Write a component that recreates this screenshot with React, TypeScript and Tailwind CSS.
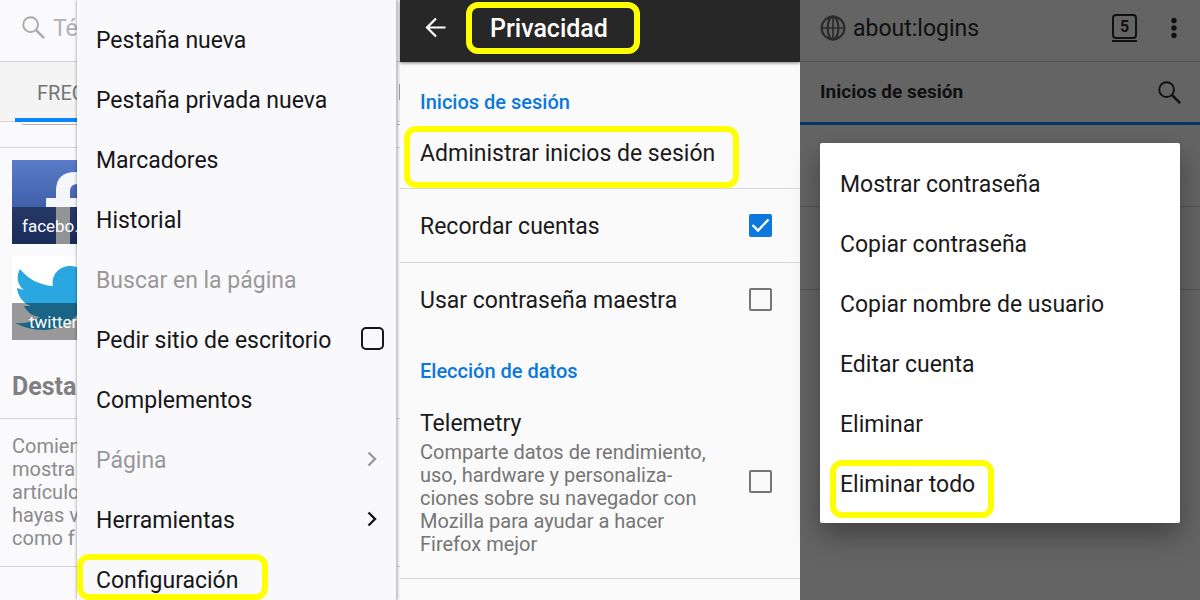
import { useState } from 'react';
import type { ReactNode } from 'react';

const menuItems = [
  { label: 'Pestaña nueva' },
  { label: 'Pestaña privada nueva' },
  { label: 'Marcadores' },
  { label: 'Historial' },
  { label: 'Buscar en la página', disabled: true },
  { label: 'Pedir sitio de escritorio', checkbox: true },
  { label: 'Complementos' },
  { label: 'Página', disabled: true, submenu: true },
  { label: 'Herramientas', submenu: true },
  { label: 'Configuración', highlighted: true },
];

const loginActions = [
  'Mostrar contraseña',
  'Copiar contraseña',
  'Copiar nombre de usuario',
  'Editar cuenta',
  'Eliminar',
  'Eliminar todo',
];

function SearchIcon({ className }: { className: string }) {
  return (
    <svg viewBox="0 0 24 24" fill="none" stroke="currentColor" strokeWidth="2" className={className}>
      <circle cx="9" cy="9" r="7.7" />
      <path d="M14.5 14.5L23 23" strokeWidth="2.6" />
    </svg>
  );
}

function Chevron() {
  return (
    <svg viewBox="0 0 10 16" fill="none" stroke="currentColor" strokeWidth="2.4" className="w-[10px] h-4">
      <path d="M1.5 1.5L8 8L1.5 14.5" />
    </svg>
  );
}

function Divider() {
  return <div className="h-px bg-[#d4d4d6]" />;
}

// 첫 번째 화면: 메뉴가 열린 홈
function HomeScreen() {
  const [desktop, setDesktop] = useState(false);

  return (
    <section className="relative min-h-screen overflow-hidden bg-[#fafafc]">
      <div className="h-[61px] pl-[22px] pb-[6px] flex items-center gap-2 text-[#a9a9ab]">
        <SearchIcon className="w-[23px] h-[23px] shrink-0" />
        <input
          type="text"
          aria-label="Buscar"
          placeholder="Té"
          className="min-w-0 flex-1 pt-[3px] text-[23px] placeholder:text-[#b0b0b2]"
        />
      </div>
      <Divider />
      <div className="h-[60px] pl-[15px] bg-[#f4f4f4] border-b border-[#d4d4d6] flex items-center justify-between text-xl text-[#747476]">
        <button type="button" className="h-[60px] w-[180px] pl-[22px] pt-[6px] text-left border-b-4 border-[#0a84ff]">
          FREC
        </button>
        <span className="w-px h-4 bg-[#a0a0a2]" />
      </div>
      <div className="ml-[21px] h-[3px] rounded-bl-lg border-b border-[#b4b4b6]" />
      <div className="h-[23px] border-b border-[#d4d4d6]" />

      {/* 자주 방문한 사이트 */}
      <div className="pt-3 pl-3 flex flex-col gap-3 w-[96px]">
        <a href="#facebook" className="relative block h-[84px] bg-linear-to-b from-[#5a7cc8] to-[#2c4a94]">
          <svg viewBox="0 0 84 84" className="w-[84px] h-[84px]">
            <path
              d="M44 84V47H34V38H44V31C44 18 51 12 63 12H76V24H66C60 24 58 27 58 32V38H74L72 47H58V84Z"
              fill="#f4f6fa"
            />
          </svg>
          <span className="absolute inset-x-0 bottom-0 h-[37px] bg-black/40 pl-[10px] text-[17px] leading-[38px] text-white">
            facebo…
          </span>
        </a>
        <a href="#twitter" className="relative block h-[84px] bg-white">
          <svg viewBox="0 0 84 84" className="w-[84px] h-[84px]">
            <path
              d="M8 13C16 23 27 29 41 30C39 19 47 10 58 10C64 10 68 12 71 16L82 12L76 21L84 19L76 27C77 54 57 74 31 74C20 74 11 71 3 67C13 68 21 66 28 61C20 60 15 56 12 50H19C11 47 6 41 5 32L12 34C5 29 4 20 8 13Z"
              fill="#2aa7e1"
            />
          </svg>
          <span className="absolute inset-x-0 bottom-0 h-[37px] bg-black/40 pl-[17px] text-[17px] leading-[38px] text-white">
            twitter
          </span>
        </a>
      </div>

      <h2 className="h-[78px] pl-3 pt-4 text-[25px] leading-[62px] font-bold text-[#808082]">Desta</h2>
      <Divider />
      <p className="h-[147px] px-3 pt-4 text-xl leading-[23px] text-[#8b8b8d]">
        Comien
        <br />
        mostra
        <br />
        artículo
        <br />
        hayas v
        <br />
        como f
      </p>
      <Divider />

      {/* 메뉴 */}
      <nav className="absolute inset-y-0 left-[77px] right-[3px] overflow-hidden pt-[11px] bg-[#f9f9fb] border-r border-[#c8c8ca] shadow-[0_0_3px_rgba(0,0,0,0.45)] text-[23px]">
        {menuItems.map((item) => {
          const color = item.disabled ? 'text-[#98989a]' : 'text-[#161618]';
          if (item.checkbox) {
            return (
              <label key={item.label} className="h-[60px] pl-[19px] pr-3 flex items-center justify-between text-[#161618]">
                {item.label}
                <span className="h-[28px]">
                  <input
                    type="checkbox"
                    checked={desktop}
                    onChange={(e) => setDesktop(e.target.checked)}
                    className="block appearance-none w-[23px] h-[23px] rounded-[5px] border-2 border-[#161618] checked:bg-[#161618]"
                  />
                </span>
              </label>
            );
          }
          return (
            <button
              key={item.label}
              type="button"
              disabled={item.disabled}
              className={`relative w-full h-[60px] pl-[19px] pr-[19px] flex items-center justify-between ${color}`}
            >
              {item.label}
              {item.submenu && (
                <span className="pb-[5px]">
                  <Chevron />
                </span>
              )}
              {item.highlighted && (
                <span className="absolute left-0 top-[3px] w-[191px] h-[46px] border-6 border-[#ffff00] rounded-xl" />
              )}
            </button>
          );
        })}
      </nav>
    </section>
  );
}

function SettingCheckbox({ label, defaultChecked, children }: { label: string; defaultChecked?: boolean; children?: ReactNode }) {
  const [checked, setChecked] = useState(!!defaultChecked);

  return (
    <label className="w-full flex items-center justify-between text-[23px] leading-[30px] text-[#1a1a1a]">
      <span className="pt-[2px]">
        {label}
        {children}
      </span>
      <span className="relative w-[23px] h-[23px] shrink-0">
        <input
          type="checkbox"
          checked={checked}
          onChange={(e) => setChecked(e.target.checked)}
          className="block appearance-none w-[23px] h-[23px] rounded-xs border-2 border-[#757575] checked:border-[#0a78dc] checked:bg-[#0a78dc]"
        />
        {checked && (
          <svg viewBox="0 0 23 23" fill="none" stroke="white" strokeWidth="2.4" className="absolute inset-0 pointer-events-none">
            <path d="M3.5 11L9 16.5L19.5 5.5" />
          </svg>
        )}
      </span>
    </label>
  );
}

// 두 번째 화면: 개인정보 설정
function PrivacyScreen() {
  return (
    <section className="min-h-screen bg-[#fafafa]">
      <header className="relative h-[62px] pl-[25px] pb-[6px] bg-[#272727] flex items-center gap-5 shadow-[0_1px_3px_rgba(0,0,0,0.5)]">
        <button type="button" aria-label="Atrás" className="text-white">
          <svg viewBox="0 0 21 20" fill="none" stroke="currentColor" strokeWidth="2.2" className="w-[21px] h-5">
            <path d="M20.5 9.5H2M11 0.5L2 9.5L11 18.5" />
          </svg>
        </button>
        <h1 className="h-[52px] pl-[18px] pr-[26px] border-6 border-[#ffff00] rounded-xl text-[25px] leading-[42px] font-medium text-white">
          Privacidad
        </h1>
      </header>

      <h2 className="px-5 pt-[26px] h-16 text-xl leading-7 font-medium text-[#0a78dc]">Inicios de sesión</h2>
      <div className="px-1 h-[62px]">
        <button
          type="button"
          className="h-[62px] pl-[10px] pr-[18px] pb-[5px] border-6 border-[#ffff00] rounded-xl text-[23px] text-[#1a1a1a]"
        >
          Administrar inicios de sesión
        </button>
      </div>
      <div className="h-px bg-[#d8d8d8]" />
      <div className="h-[73px] pl-5 pr-7 flex items-center">
        <SettingCheckbox label="Recordar cuentas" defaultChecked />
      </div>
      <div className="h-px bg-[#d8d8d8]" />
      <div className="h-[73px] pl-5 pr-7 flex items-center">
        <SettingCheckbox label="Usar contraseña maestra" />
      </div>
      <h2 className="px-5 pt-[21px] h-[71px] text-xl leading-7 font-medium text-[#0a78dc]">Elección de datos</h2>
      <div className="h-[171px] pl-5 pr-7 flex items-start">
        <SettingCheckbox label="Telemetry">
          <span className="block text-xl leading-[23px] text-[#757575] pt-[2px]">
            Comparte datos de rendimiento,
            <br />
            uso, hardware y personaliza-
            <br />
            ciones sobre su navegador con
            <br />
            Mozilla para ayudar a hacer
            <br />
            Firefox mejor
          </span>
        </SettingCheckbox>
      </div>
      <div className="h-px bg-[#d8d8d8]" />
    </section>
  );
}

// 세 번째 화면: 로그인 목록과 대화상자
function LoginsScreen() {
  return (
    <section className="relative min-h-screen bg-[#fafafa] text-[#2a2a2a]">
      <header className="h-[61px] pl-5 pr-[23px] pb-[6px] flex items-center">
        <svg viewBox="0 0 26 26" fill="none" stroke="#6a6a6a" strokeWidth="2.2" className="w-[26px] h-[26px]">
          <circle cx="13" cy="13" r="11.4" />
          <ellipse cx="13" cy="13" rx="5.4" ry="11.4" />
          <path d="M1.5 13H24.5M13 1.5V24.5" strokeWidth="1.7" />
        </svg>
        <span className="flex-1 pl-[7px] pt-[3px] text-[23px]">about:logins</span>
        <button type="button" aria-label="Pestañas" className="mr-[34px] w-[25px] h-[29px] border-b-2 border-current">
          <span className="block w-[25px] h-[25px] border-2 border-current rounded-sm text-base leading-[22px] font-bold">5</span>
        </button>
        <button type="button" aria-label="Menú">
          <svg viewBox="0 0 6 22" fill="currentColor" className="w-[6px] h-[22px]">
            <circle cx="3" cy="3.5" r="2.7" />
            <circle cx="3" cy="11" r="2.7" />
            <circle cx="3" cy="18.5" r="2.7" />
          </svg>
        </button>
      </header>
      <div className="h-px bg-[#d4d4d6]" />
      <div className="h-[63px] pl-5 pr-[19px] flex items-center justify-between border-b-3 border-[#0a84ff]">
        <h2 className="text-[19px] font-bold">Inicios de sesión</h2>
        <button type="button" aria-label="Buscar">
          <SearchIcon className="w-[23px] h-[23px]" />
        </button>
      </div>
      <div className="h-[82px] border-b border-[#d4d4d6]" />
      <div className="h-[83px] border-b border-[#d4d4d6]" />

      <div className="absolute inset-0 px-5 pt-[66px] bg-black/60 flex items-center">
        <div
          role="dialog"
          aria-label="Opciones de cuenta"
          className="w-full pt-[12px] pb-[8px] bg-white rounded-xs shadow-[0_12px_28px_rgba(0,0,0,0.35)] text-[23px] text-[#1a1a1a]"
        >
          {loginActions.map((action) => (
            <button key={action} type="button" className="relative block w-full h-[60px] px-5 text-left">
              {action}
              {action === 'Eliminar todo' && (
                <span className="absolute left-[10px] top-[5px] w-[164px] h-[58px] border-6 border-[#ffff00] rounded-xl" />
              )}
            </button>
          ))}
        </div>
      </div>
    </section>
  );
}

export default function App() {
  return (
    <main className="min-h-screen grid grid-cols-3 font-[Roboto,sans-serif]">
      <HomeScreen />
      <PrivacyScreen />
      <LoginsScreen />
    </main>
  );
}
